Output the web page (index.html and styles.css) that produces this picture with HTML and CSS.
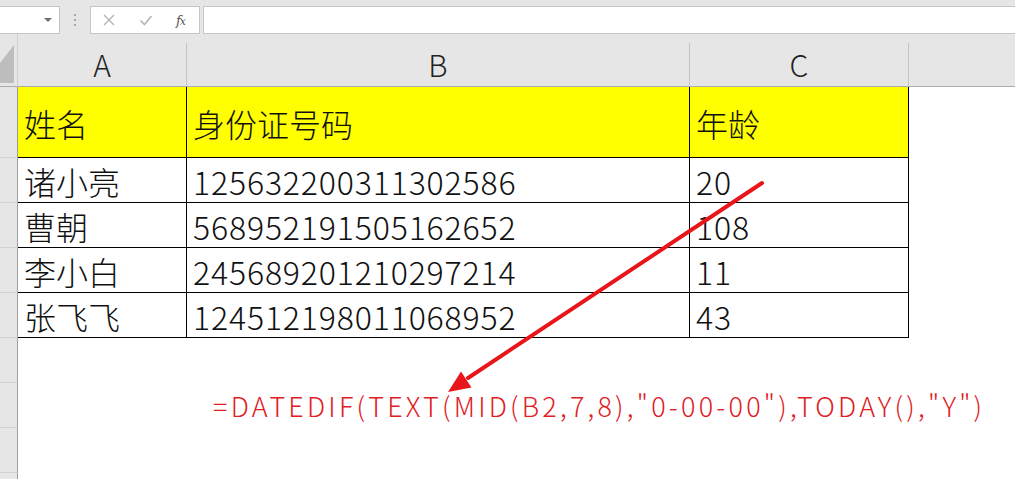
FILE: index.html
```html
<!DOCTYPE html>
<html lang="zh-CN">
<head>
<meta charset="utf-8">
<title>身份证号计算年龄</title>
<link rel="stylesheet" href="styles.css">
</head>
<body>
<div class="page">
  <div class="toolbar">
    <div class="namebox"><span class="dd"></span></div>
    <div class="grip"><i></i><i></i><i></i></div>
    <div class="fxbox">
      <svg class="ico" width="14" height="14" viewBox="0 0 14 14"><path d="M2 2 L12 12 M12 2 L2 12" stroke="#b4b4b4" stroke-width="1.4" fill="none"/></svg>
      <svg class="ico" width="14" height="14" viewBox="0 0 14 14"><path d="M1.5 7.5 L5.5 11.5 L12.5 3" stroke="#b4b4b4" stroke-width="1.6" fill="none"/></svg>
      <span class="fx">f<small>x</small></span>
    </div>
    <div class="formula"></div>
  </div>

  <div class="sheet">
    <div class="corner"><svg width="17" height="53" viewBox="0 0 17 53"><polygon points="14,11 14,49 0,49 0,29" fill="#bdbdbd"/></svg></div>
    <div class="ch"><span class="lbl">A</span></div>
    <div class="ch"><span class="lbl">B</span></div>
    <div class="ch"><span class="lbl">C</span></div>
    <div class="ch rest"><span class="lbl"></span></div>

    <div class="rh"></div>
    <div class="c hd">姓名</div>
    <div class="c hd">身份证号码</div>
    <div class="c hd">年龄</div>
    <div class="blank"></div>

    <div class="rh"></div>
    <div class="c">诸小亮</div>
    <div class="c num">125632200311302586</div>
    <div class="c num">20</div>
    <div class="blank"></div>

    <div class="rh"></div>
    <div class="c">曹朝</div>
    <div class="c num">568952191505162652</div>
    <div class="c num">108</div>
    <div class="blank"></div>

    <div class="rh"></div>
    <div class="c">李小白</div>
    <div class="c num">245689201210297214</div>
    <div class="c num">11</div>
    <div class="blank"></div>

    <div class="rh"></div>
    <div class="c">张飞飞</div>
    <div class="c num">124512198011068952</div>
    <div class="c num">43</div>
    <div class="blank"></div>

    <div class="rh"></div>
    <div class="blank span"></div>

    <div class="rh"></div>
    <div class="note">=DATEDIF(TEXT(MID(B2,7,8),"0-00-00"),TODAY(),"Y")</div>

    <div class="rh"></div>
    <div class="blank span"></div>

    <div class="rh"></div>
    <div class="blank span"></div>
  </div>

  <svg class="arrow" width="1015" height="479" viewBox="0 0 1015 479">
    <line x1="762" y1="183" x2="468" y2="378" stroke="#e8161b" stroke-width="4" stroke-linecap="round"/>
    <polygon points="448,392 471.5,387.5 461,371.5" fill="#e8161b"/>
  </svg>
</div>
</body>
</html>
```

FILE: styles.css
```css
* { box-sizing: border-box; }
html, body { margin: 0; padding: 0; background: #ffffff; }
body { font-family: "Noto Sans CJK SC", "Noto Sans", sans-serif; color: #111; overflow: hidden; }
.page { position: relative; width: 1015px; height: 479px; overflow: hidden; }

.toolbar {
  height: 34px;
  background: #e6e6e6;
  display: flex;
  align-items: flex-start;
  padding-top: 6px;
}
.namebox {
  margin-left: -1px;
  width: 61px;
  height: 28px;
  background: #fff;
  border: 1px solid #c6c6c6;
  display: flex;
  align-items: center;
  justify-content: flex-end;
  padding-right: 7px;
}
.dd {
  width: 0; height: 0;
  border-left: 4px solid transparent;
  border-right: 4px solid transparent;
  border-top: 4px solid #707070;
}
.grip {
  width: 30px;
  height: 28px;
  display: flex;
  flex-direction: column;
  align-items: center;
  justify-content: center;
  gap: 3px;
}
.grip i { display: block; width: 2px; height: 2px; background: #a8a8a8; }
.fxbox {
  width: 110px;
  height: 28px;
  background: #fff;
  border: 1px solid #c6c6c6;
  display: flex;
  align-items: center;
  padding-left: 11px;
  gap: 23px;
}
.fx {
  font-family: "DejaVu Serif", "Liberation Serif", serif;
  font-style: italic;
  font-size: 13px;
  color: #555;
  letter-spacing: -1px;
}
.fx small { font-size: 11px; }
.formula {
  margin-left: 3px;
  flex: 1;
  height: 28px;
  background: #fff;
  border: 1px solid #c6c6c6;
  border-right: none;
}

.sheet {
  display: grid;
  grid-template-columns: 18px 169px 503px 219px 1fr;
  grid-template-rows: 53px 71px 45px 45px 45px 45px 45px 45px 45px 45px;
}
.corner {
  background: #e6e6e6;
  border-right: 1px solid #cfcfcf;
  border-bottom: 1px solid #ababab;
}
.corner svg { display: block; }
.ch {
  background: #e6e6e6;
  border-bottom: 1px solid #ababab;
  display: flex;
  padding-top: 9px;
}
.ch .lbl {
  flex: 1;
  border-right: 1px solid #c4c4c4;
  display: flex;
  align-items: center;
  justify-content: center;
  font-size: 30px;
  font-weight: 300;
  line-height: 1;
  color: #222;
  padding-bottom: 2px;
}
.ch.rest .lbl { border-right: none; }
.rh {
  background: #e6e6e6;
  border-right: 1px solid #9e9e9e;
  border-bottom: 1px solid #d2d2d2;
}
.c {
  border-right: 1px solid #000;
  border-bottom: 1px solid #000;
  display: flex;
  align-items: center;
  padding-left: 6px;
  padding-top: 2px;
  font-size: 32px;
  font-weight: 300;
  line-height: 32px;
  color: #111;
  white-space: nowrap;
}
.c.num { letter-spacing: 0.85px; }
.c.hd { background: #ffff00; }
.blank { background: #fff; }
.span { grid-column: 2 / -1; }
.note {
  grid-column: 2 / -1;
  padding-left: 195px;
  padding-top: 9px;
  font-size: 27px;
  font-weight: 300;
  line-height: 27px;
  letter-spacing: 3.2px;
  color: #e0201f;
  white-space: nowrap;
}

.arrow { position: absolute; left: 0; top: 0; pointer-events: none; }
```
